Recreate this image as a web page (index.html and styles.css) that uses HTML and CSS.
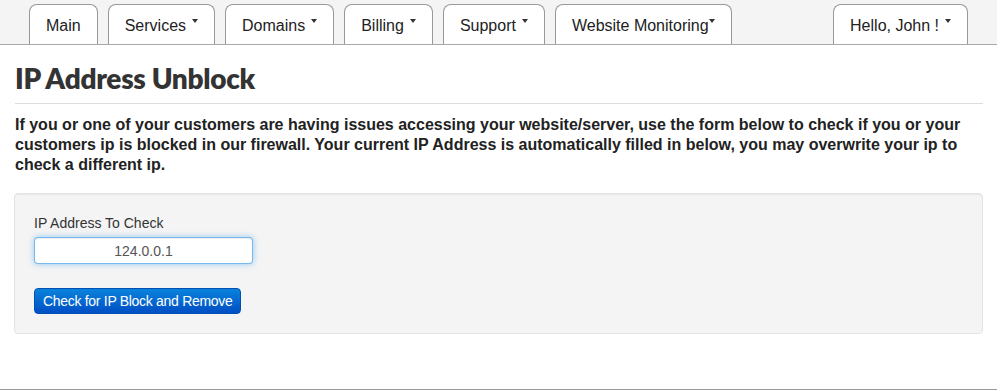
FILE: index.html
```
<!DOCTYPE html>
<html>
<head>
  <meta charset="utf-8">
  <meta name="viewport" content="width=device-width, initial-scale=1">
  <title>IP Address Unblock</title>
  <link rel="stylesheet" href="styles.css">
</head>
<body>
  <div class="tabs">
    <a class="tab" href="#">Main</a>
    <a class="tab" href="#">Services<b class="caret"></b></a>
    <a class="tab" href="#">Domains<b class="caret"></b></a>
    <a class="tab" href="#">Billing<b class="caret"></b></a>
    <a class="tab" href="#">Support<b class="caret"></b></a>
    <a class="tab" href="#">Website Monitoring<b class="caret tight"></b></a>
    <a class="tab user" href="#">Hello, John !<b class="caret"></b></a>
  </div>

  <div class="content">
    <h1 class="title">IP Address Unblock</h1>
    <p class="intro">If you or one of your customers are having issues accessing your website/server, use the form below to check if you or your customers ip is blocked in our firewall. Your current IP Address is automatically filled in below, you may overwrite your ip to check a different ip.</p>

    <form class="well">
      <label class="label" for="ip">IP Address To Check</label>
      <input class="ip" id="ip" type="text" value="124.0.0.1">
      <button class="btn" type="button">Check for IP Block and Remove</button>
    </form>
  </div>

  <div class="footer"></div>
</body>
</html>
```

FILE: styles.css
```
* {
  margin: 0;
  padding: 0;
  box-sizing: border-box;
}

html, body {
  background: #fff;
  overflow: hidden;
}

body {
  font-family: "Liberation Sans", Arial, sans-serif;
  font-size: 14px;
  line-height: 20px;
  color: #333;
}

/* top tabs */
.tabs {
  display: flex;
  align-items: flex-end;
  gap: 10px;
  height: 45px;
  padding: 0 29px;
  background: #f4f4f4;
  border-bottom: 1px solid #a9a9a9;
}

.tab {
  display: block;
  height: 40px;
  padding: 11px 16px 0;
  background: #fff;
  border: 1px solid #999;
  border-bottom: none;
  border-radius: 8px 8px 0 0;
  font-size: 16px;
  line-height: 20px;
  color: #222;
  text-decoration: none;
}

.tab.user {
  margin-left: auto;
}

.caret {
  display: inline-block;
  vertical-align: top;
  width: 0;
  height: 0;
  margin: 3px 0 0 6px;
  border-top: 4px solid #333;
  border-left: 3.5px solid transparent;
  border-right: 3.5px solid transparent;
}

.caret.tight {
  margin-left: 0;
}

/* page */
.content {
  padding: 0 14px 0 15px;
}

.title {
  margin-top: 18px;
  padding-bottom: 10px;
  border-bottom: 1px solid #ddd;
  font-family: Lato, "Open Sans", sans-serif;
  font-size: 28px;
  line-height: 30px;
  font-weight: 800;
  letter-spacing: -0.3px;
  color: #333;
}

.intro {
  margin-top: 11px;
  font-size: 16px;
  line-height: 20px;
  font-weight: 700;
  color: #222;
}

.well {
  display: flex;
  flex-direction: column;
  align-items: flex-start;
  margin: 18px 0 0 -1px;
  padding: 19px;
  background: #f4f4f4;
  border: 1px solid #e3e3e3;
  border-radius: 4px;
  box-shadow: inset 0 1px 1px rgba(0, 0, 0, 0.05);
}

.label {
  margin-bottom: 4px;
  font-size: 14px;
  color: #333;
}

.ip {
  width: 219px;
  height: 27px;
  padding: 0 6px;
  border: 1px solid rgba(82, 168, 236, 0.8);
  border-radius: 4px;
  box-shadow: inset 0 1px 1px rgba(0, 0, 0, 0.075), 0 0 6px rgba(82, 168, 236, 0.6);
  font-family: "Liberation Sans", Arial, sans-serif;
  font-size: 14px;
  color: #555;
  text-align: center;
  outline: none;
}

.btn {
  margin-top: 24px;
  height: 26px;
  padding: 2px 8px;
  border: 1px solid #0050b3;
  border-radius: 4px;
  background: linear-gradient(to bottom, #0a82dc, #004fc4);
  font-family: "Liberation Sans", Arial, sans-serif;
  font-size: 14px;
  line-height: 20px;
  letter-spacing: -0.3px;
  color: #fff;
  cursor: pointer;
}

.footer {
  margin-top: 55px;
  border-top: 1px solid #999;
  height: 10px;
}
```
